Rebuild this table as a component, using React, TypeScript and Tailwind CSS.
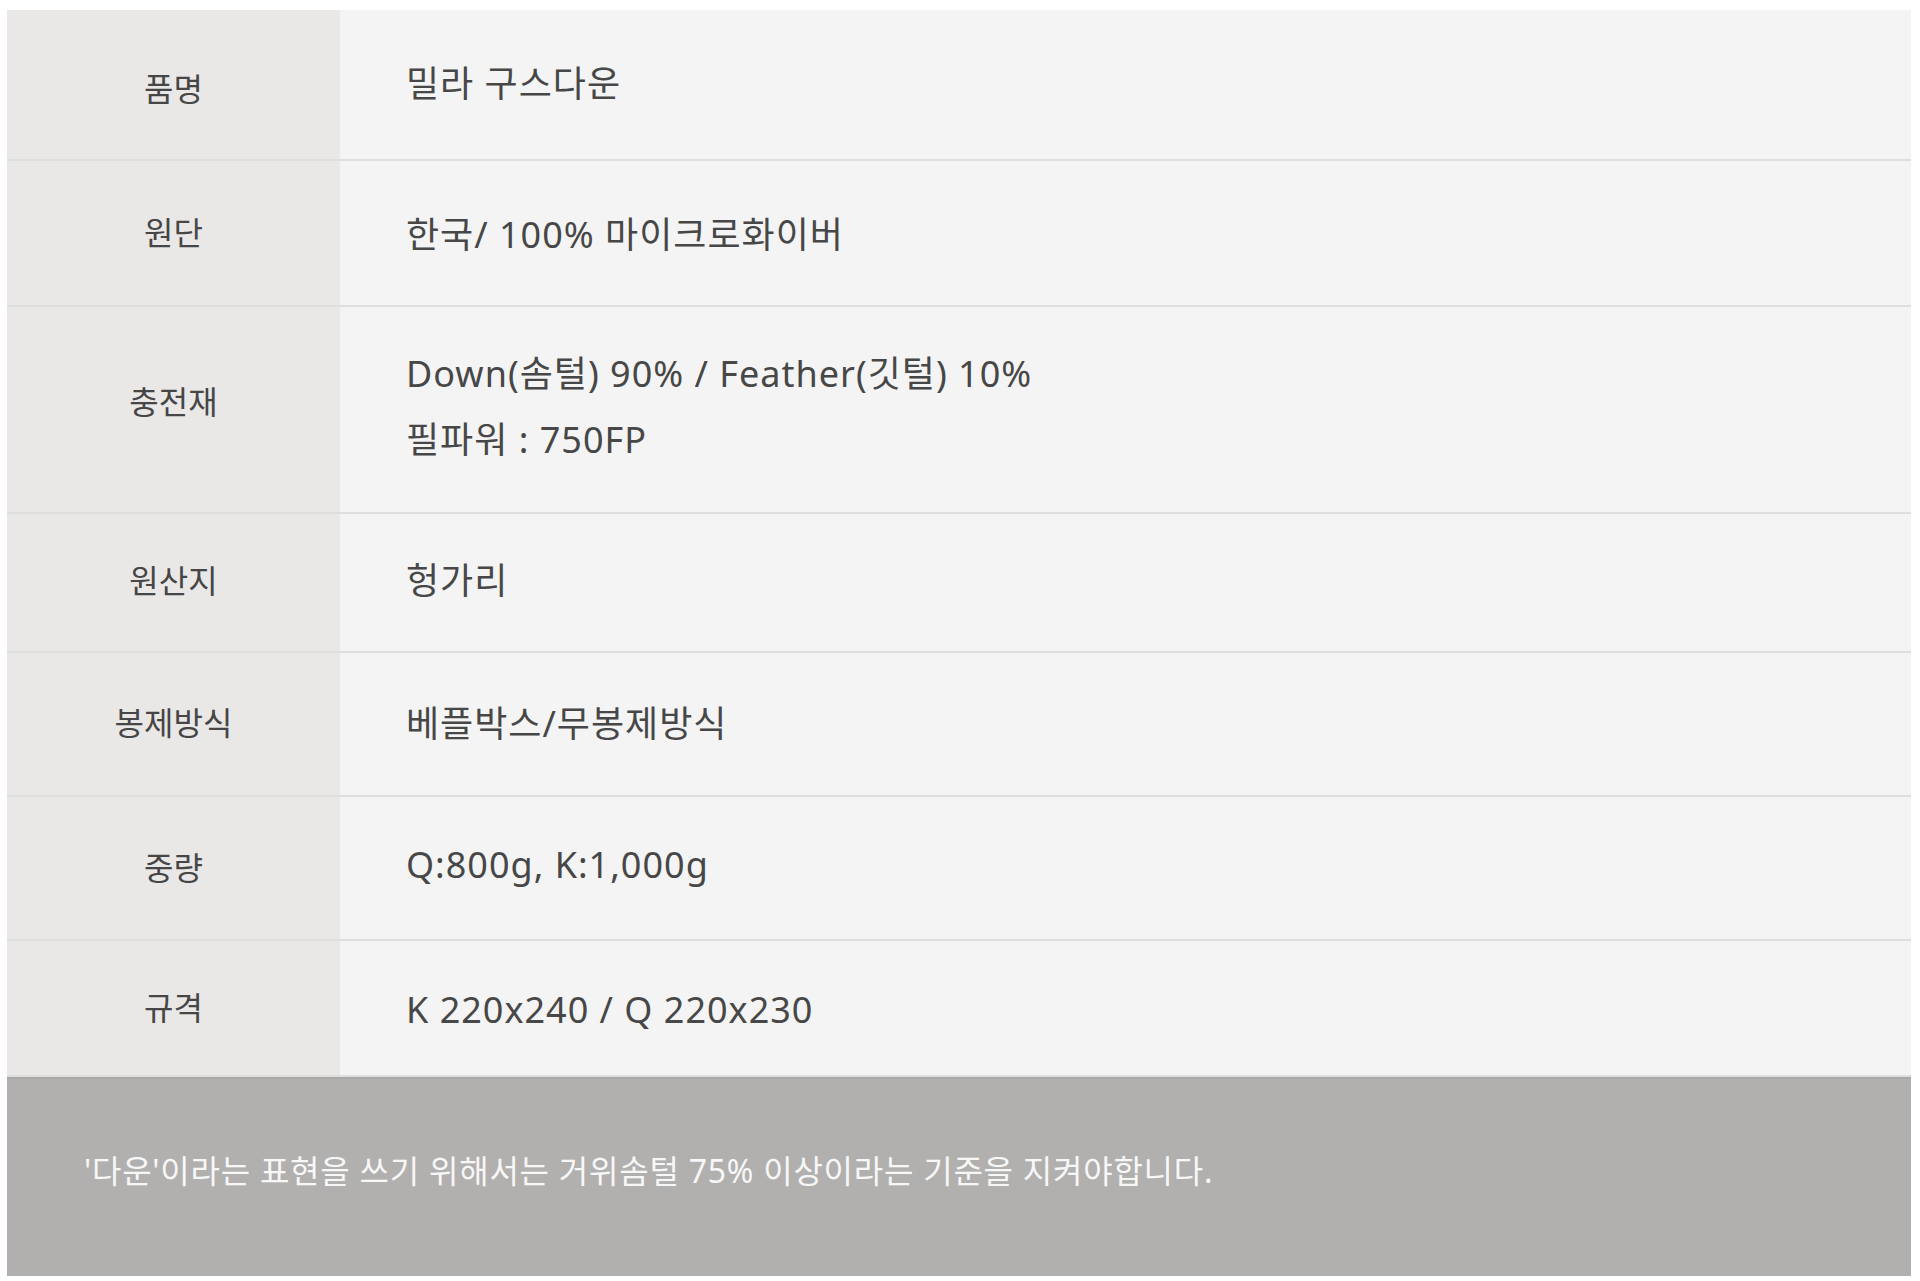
import React from "react";

type Row = {
  label: string;
  lines: string[];
  h: string;
  labelCls?: string;
  valueCls?: string;
};

// product spec rows, heights read off the reference
const rows: Row[] = [
  { label: "품명", lines: ["밀라 구스다운"], h: "h-[151px]", labelCls: "pt-[8px]", valueCls: "pb-[6px]" },
  { label: "원단", lines: ["한국/ 100% 마이크로화이버"], h: "h-[146px]" },
  {
    label: "충전재",
    lines: ["Down(솜털) 90% / Feather(깃털) 10%", "필파워 : 750FP"],
    h: "h-[207px]",
    labelCls: "pb-[16px]",
    valueCls: "pb-[10px]",
  },
  { label: "원산지", lines: ["헝가리"], h: "h-[139px]", labelCls: "pb-[4px]", valueCls: "pb-[8px]" },
  { label: "봉제방식", lines: ["베플박스/무봉제방식"], h: "h-[144px]", labelCls: "pb-[2px]", valueCls: "pb-[4px]" },
  { label: "중량", lines: ["Q:800g, K:1,000g"], h: "h-[144px]", valueCls: "pb-[10px]" },
  { label: "규격", lines: ["K 220x240 / Q 220x230"], h: "h-[136px]" },
];

const App = () => {
  return (
    <div
      className="w-[1920px] min-h-[1281px] bg-white pt-[10px]"
      style={{ fontFamily: '"Noto Sans", "Noto Sans CJK KR", sans-serif' }}
    >
      <div className="ml-[7px] w-[1904px]">
        {rows.map((row) => (
          <div key={row.label} className={`flex ${row.h} border-b-2 border-[#dedede]`}>
            <div
              className={`w-[333px] shrink-0 bg-[#e9e8e6] flex items-center justify-center text-[32px] text-[#464646] ${row.labelCls ?? ""}`}
            >
              {row.label}
            </div>
            <div
              className={`flex-1 bg-[#f4f4f4] flex flex-col justify-center pl-[66px] pt-[4px] text-[36px] leading-[66px] tracking-[1px] text-[#474747] ${row.valueCls ?? ""}`}
            >
              {row.lines.map((line) => (
                <div key={line}>{line}</div>
              ))}
            </div>
          </div>
        ))}
        {/* note bar */}
        <div className="h-[199px] bg-[#b1b0ae] border-t-2 border-[#a9a8a6] flex items-center pl-[77px] pb-[14px] text-[32px] text-[#f7f7f7] tracking-[0.75px]">
          '다운'이라는 표현을 쓰기 위해서는 거위솜털 75% 이상이라는 기준을 지켜야합니다.
        </div>
      </div>
    </div>
  );
};

export default App;
